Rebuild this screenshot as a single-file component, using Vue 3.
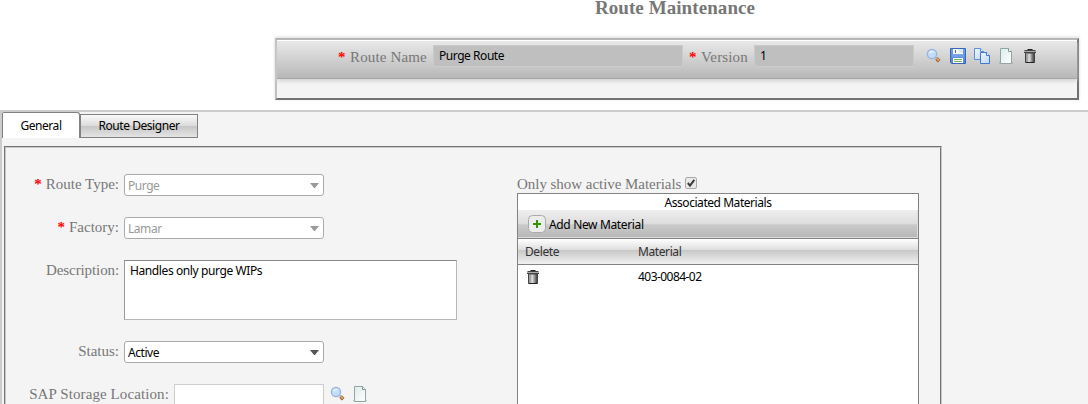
<script setup>
const actions = ['search', 'save', 'copy', 'page', 'trash']
const selects = [
  { label: 'Route Type:', value: 'Purge' },
  { label: 'Factory:', value: 'Lamar' },
]
</script>

<template>
  <div class="screen">
    <svg class="defs" width="0" height="0" aria-hidden="true">
      <defs>
        <linearGradient id="metal"><stop offset="0" stop-color="#555" /><stop offset=".4" stop-color="#e4e4e4" /><stop offset="1" stop-color="#333" /></linearGradient>
        <linearGradient id="sky" x2="1" y2="1"><stop offset="0" stop-color="#f2f8ff" /><stop offset="1" stop-color="#b9d6f8" /></linearGradient>
        <linearGradient id="paper" x2="1" y2="1"><stop offset="0" stop-color="#dcebea" /><stop offset="1" stop-color="#fff" /></linearGradient>
        <linearGradient id="disk" x2="0" y2="1"><stop offset="0" stop-color="#6fa0ea" /><stop offset="1" stop-color="#5583d2" /></linearGradient>
      </defs>
      <symbol id="search" viewBox="0 0 16 16">
        <path d="M9.500 9.500l1.500 1" stroke="#8aa0b4" stroke-width="1.500" />
        <path d="M10.500 10.500l2.700 2.700" stroke="#9a6233" stroke-width="3.600" />
        <path d="M10.600 10.300l2.400 2.400" stroke="#e5a568" stroke-width="1.700" />
        <circle cx="6" cy="6" r="4.600" fill="#c4dcf8" stroke="#94b4e2" stroke-width="1.300" />
        <path d="M3.500 5.200Q5 3 7.500 4" fill="none" stroke="#e8f3ff" stroke-width="1.400" />
      </symbol>
      <symbol id="save" viewBox="0 0 16 16">
        <path d="M.5.5h15v15H1.500l-1-1z" fill="url(#disk)" stroke="#3568b8" />
        <path d="M3 1h10v5H3z" fill="#fff" />
        <path d="M8 1h5v4H9z" fill="#dce8f8" />
        <path d="M5 2h1v3H5z" fill="#3c6cb9" />
        <path d="M2 6h12v3H2z" fill="#73a2eb" />
        <path d="M3 10h10v5H3z" fill="#fff" />
        <path d="M4 11h8v1H4zm0 2h8v1H4z" fill="#78b65a" />
      </symbol>
      <symbol id="copy" viewBox="0 0 16 16">
        <path d="M.5.5h6L9.500 3.500v8h-9z" fill="url(#sky)" stroke="#5b8fd8" />
        <path d="M6.500.5v3h3" fill="#fff" stroke="#5b8fd8" />
        <path d="M6.500 4.500h6l3 3v8h-9z" fill="url(#sky)" stroke="#4378c8" />
        <path d="M12.500 4.500v3h3" fill="#fff" stroke="#4378c8" />
      </symbol>
      <symbol id="page" viewBox="0 0 16 16">
        <path d="M1 14h14v1.500H1z" fill="#777" opacity=".35" />
        <path d="M2.500.5h8l3 3v12h-11z" fill="url(#paper)" stroke="#91a6a4" />
        <path d="M10.500.5v3h3" fill="#fff" stroke="#819795" />
      </symbol>
      <symbol id="trash" viewBox="0 0 16 16">
        <path d="M5.500 1.500h5" stroke="#222" />
        <path d="M2.500 2.500h11M2 4.500h12" stroke="#444" />
        <path d="M2 3.500h12" stroke="#aaa" />
        <path d="M3.500 5h9v9.500h-9z" fill="url(#metal)" stroke="#444" />
        <path d="M4.500 5v9" stroke="#bbb" opacity=".5" />
        <path d="M4 14.500h8" stroke="#222" />
      </symbol>
    </svg>

    <header class="top">
      <h1>Route Maintenance</h1>
      <section class="routebox">
        <div class="routebar">
          <i class="star">*</i>
          <label class="serif name">Route Name</label>
          <div class="readonly wide">Purge Route</div>
          <i class="star second">*</i>
          <label class="serif version">Version</label>
          <div class="readonly narrow">1</div>
          <nav class="actions">
            <svg v-for="a in actions" :key="a" class="icon"><use :href="'#' + a" /></svg>
          </nav>
        </div>
      </section>
    </header>

    <main class="body">
      <div class="tabs">
        <div class="tab active"><span>General</span></div>
        <div class="tab"><span>Route Designer</span></div>
      </div>
      <div class="frame">
        <form class="form">
          <div v-for="s in selects" :key="s.label" class="row">
            <label class="serif label"><i class="star">*</i>{{ s.label }}</label>
            <div class="select disabled"><span>{{ s.value }}</span><b class="arrow"></b></div>
          </div>
          <div class="row area">
            <label class="serif label">Description:</label>
            <div class="textarea">Handles only purge WIPs</div>
          </div>
          <div class="row">
            <label class="serif label">Status:</label>
            <div class="select"><span>Active</span><b class="arrow"></b></div>
          </div>
          <div class="row storage">
            <label class="serif label">SAP Storage Location:</label>
            <div class="input"></div>
            <svg class="icon"><use href="#search" /></svg>
            <svg class="icon"><use href="#page" /></svg>
          </div>
        </form>

        <section class="materials">
          <div class="only serif"><span>Only show active Materials</span>
            <svg class="check" viewBox="0 0 12 12"><rect x=".5" y=".5" width="11" height="11" rx="1.500" fill="#e9e9e9" stroke="#aaa" /><path d="M2.800 6l2.200 2.600L9.300 2.800" fill="none" stroke="#3b3b3b" stroke-width="2" /></svg>
          </div>
          <div class="grid">
            <div class="caption"><span>Associated Materials</span></div>
            <div class="command">
              <svg class="plus" viewBox="0 0 18 18"><rect x=".5" y=".5" width="17" height="17" rx="4" fill="#ececec" stroke="#aaa" /><path d="M9 5v8M5 9h8" stroke="#2f9505" stroke-width="2" /></svg>
              <span class="add">Add New Material</span>
            </div>
            <div class="cols head"><span class="del">Delete</span><span class="mat">Material</span></div>
            <div class="cols"><span class="del"><svg class="icon"><use href="#trash" /></svg></span><span class="num">403-0084-02</span></div>
          </div>
        </section>
      </div>
    </main>
  </div>
</template>

<style>
html, body { overflow: hidden; background: #fff; }
</style>

<style scoped>
* { box-sizing: border-box; }
.screen { height: 404px; display: flex; flex-direction: column; overflow: hidden; font: 12px/16px "Noto Sans", "Open Sans", sans-serif; color: #000; letter-spacing: -0.45px; }
.defs { position: absolute; }
.serif { font: 15px/18px "Liberation Serif", serif; color: #777; letter-spacing: 0; white-space: nowrap; }
.star { font: bold 15px/18px "Liberation Serif", serif; color: #f00; letter-spacing: 0; }
.icon { width: 16px; height: 16px; flex: none; display: block; }
.top { height: 110px; flex: none; }
h1 { margin: 0 0 0 262px; height: 38px; font: bold 19px/16px "Liberation Serif", serif; text-align: center; color: #777; letter-spacing: 0.08px; }
.routebox { margin-left: 275px; width: 804px; height: 62px; border: 2px solid; border-color: #b4b4b4 #747172 #747172 #c0c0c0; background: #f4f4f4; box-shadow: 0 -1px 3px #ddd; }
.routebar { height: 39px; display: flex; background: linear-gradient(#e8e8e8, #b8b8b8); border-top: 1px solid #fff; border-bottom: 1px solid #a5a5a5; box-shadow: 0 2px 4px #d0d0d0; padding: 4px 0 0 61px; }
.routebar .star { width: 12px; padding-top: 3px; }
.routebar .serif { padding-top: 3px; letter-spacing: 0.15px; }
.name { width: 83px; }
.version { width: 53px; }
.routebar .star.second { margin-left: 6px; }
.readonly { height: 22px; border: 1px solid #cbcbcb; background: #bfbfbf; padding: 2px 5px; }
.wide { width: 250px; }
.narrow { width: 160px; }
.actions { display: flex; gap: 8px; padding: 3px 0 0 12px; }
.body { flex: 1; border-top: 2px solid #ccc; border-left: 2px solid #ccc; background: #f4f4f4; min-height: 0; }
.tabs { height: 26px; display: flex; align-items: flex-end; }
.tab { width: 118px; height: 24px; border: 1px solid #818181; background: linear-gradient(#fafafa, #dcdcdc 48%, #c6c6c6 50%, #e4e4e4); text-align: center; line-height: 21px; }
.tab.active { width: 78px; height: 26px; background: #fff; border-bottom: 0; border-radius: 2px 3px 0 0; line-height: 25px; }
.frame { margin: 8px 0 0 2px; width: 938px; height: 400px; border: 2px groove #ccc; border-color: #c8c8c8; display: flex; }
.form { width: 511px; flex: none; padding-top: 26px; }
.row { display: flex; margin-bottom: 21px; }
.label { width: 113px; text-align: right; margin-right: 5px; padding-top: 1px; }
.label .star { margin-right: 4px; }
.select { width: 200px; height: 22px; border: 1px solid #aaa; border-radius: 3px; background: #fff; padding: 3px 4px 0 3px; display: flex; justify-content: space-between; }
.arrow { margin-top: 5px; width: 9px; height: 5px; background: #555; clip-path: polygon(0 0, 100% 0, 55% 100%, 45% 100%); }
.disabled { color: #999; }
.disabled .arrow { background: #999; }
.textarea { width: 333px; height: 60px; border: 1px solid; border-color: #888 #b8b8b8 #b8b8b8 #999; background: #fff; padding: 2px 5px; letter-spacing: -0.4px; }
.area .label { letter-spacing: -0.1px; }
.storage .label { width: 163px; letter-spacing: 0.1px; }
.input { width: 150px; height: 22px; border: 1px solid #ccc; background: #fff; margin-right: 6px; }
.storage .icon { margin: 2px 6px 0 0; }
.materials { width: 402px; padding-top: 27px; }
.only { height: 18px; display: flex; letter-spacing: -0.04px; }
.check { width: 12px; height: 12px; margin: 2px 0 0 4px; }
.grid { height: 300px; border: 1px solid #828282; background: #fff; }
.caption { height: 16px; text-align: center; line-height: 17px; }
.command { height: 28px; display: flex; align-items: center; padding-left: 10px; border-right: 1px solid #ddd; border-bottom: 1px solid #ddd; background: linear-gradient(#efefef, #dcdcdc 53%, #cacaca 54%, #b8b8b8); }
.add { padding-top: 2px; letter-spacing: -0.35px; }
.plus { width: 18px; height: 18px; margin-right: 3px; }
.cols { display: flex; height: 25px; padding: 4px 0 0 7px; }
.head { height: 27px; border-top: 1px solid #828282; border-bottom: 1px solid #828282; background: linear-gradient(#fff, #dedede 43%, #c8c8c8 45%, #f0f0f0); color: #333; padding-top: 5px; letter-spacing: -0.4px; }
.del { width: 113px; }
.num { letter-spacing: -0.55px; }
</style>
